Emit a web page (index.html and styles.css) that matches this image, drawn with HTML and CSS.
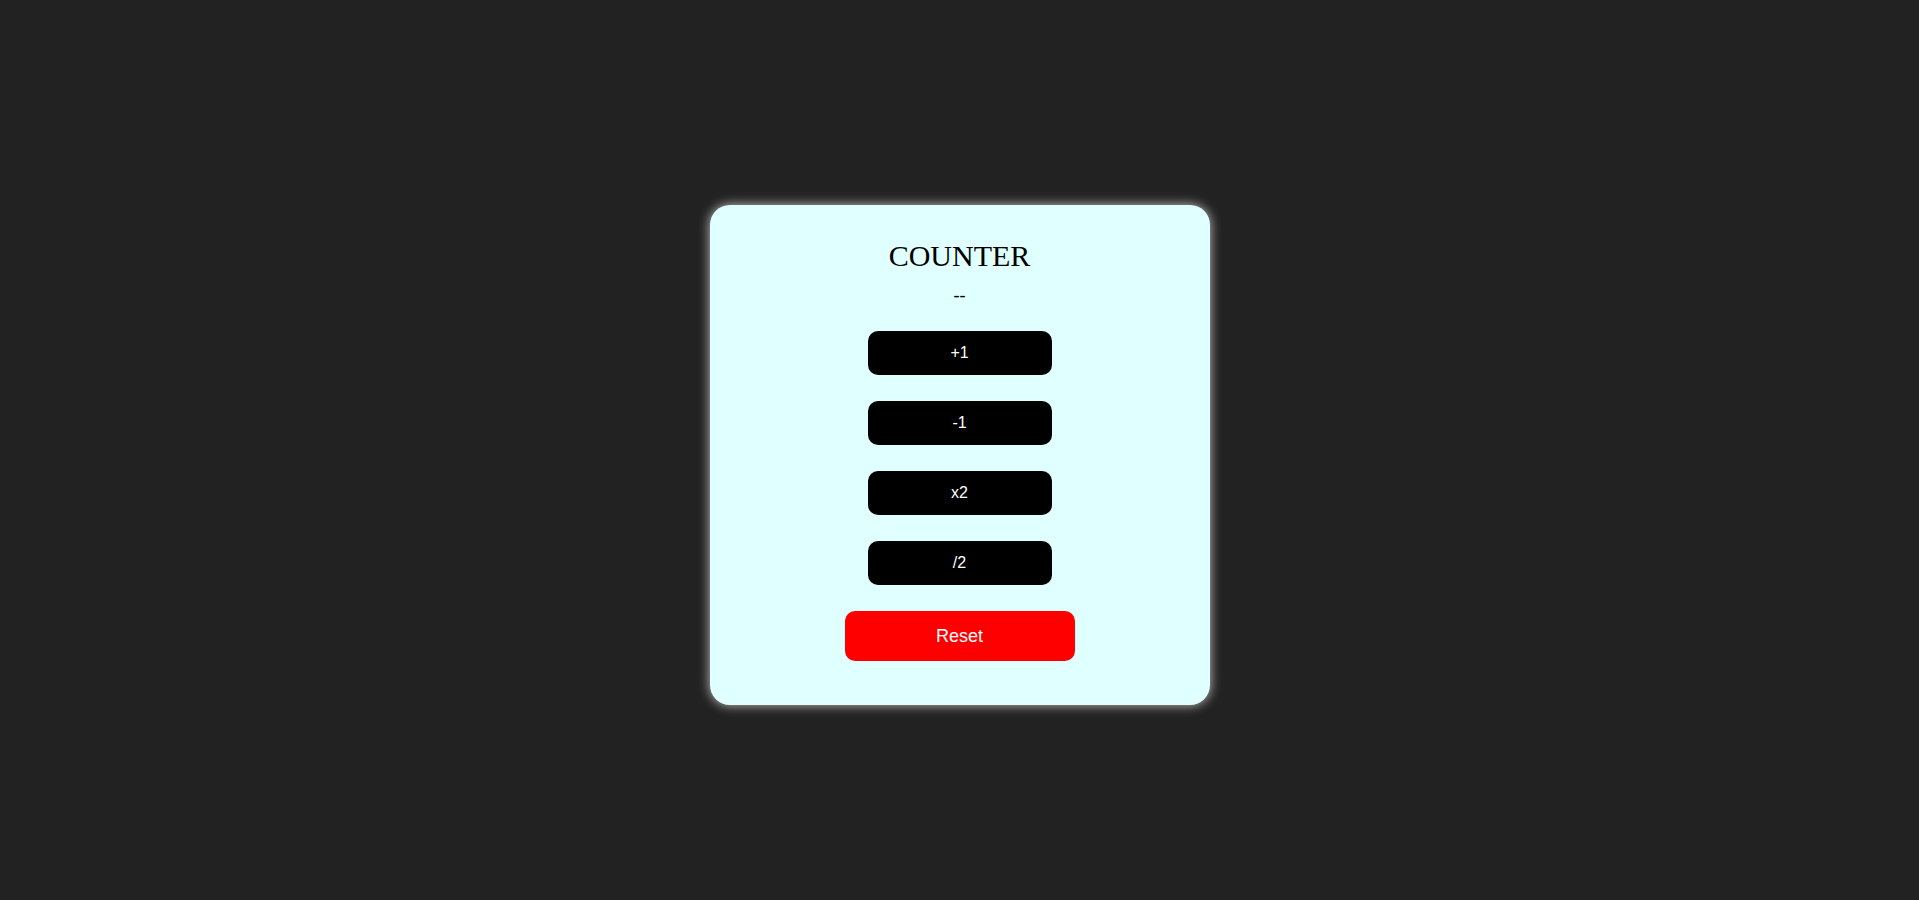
FILE: index.html
```html
<!DOCTYPE html>
<html lang="en">
<head>
<meta charset="utf-8">
<title>Counter</title>
<link rel="stylesheet" href="styles.css">
</head>
<body>
<main class="page">
  <section class="card">
    <h1 class="title">COUNTER</h1>
    <p class="value">--</p>
    <div class="actions">
      <button class="btn">+1</button>
      <button class="btn">-1</button>
      <button class="btn">x2</button>
      <button class="btn">/2</button>
      <button class="btn btn-reset">Reset</button>
    </div>
  </section>
</main>
</body>
</html>
```

FILE: styles.css
```css
html, body {
  margin: 0;
  padding: 0;
  height: 100%;
}
body {
  background: #222222;
  font-family: "Liberation Serif", "Times New Roman", serif;
}
.page {
  height: 900px;
  display: flex;
  justify-content: center;
  align-items: flex-start;
  padding-top: 205px;
  box-sizing: border-box;
}
.card {
  width: 500px;
  height: 500px;
  box-sizing: border-box;
  background: #e0ffff;
  border-radius: 20px;
  box-shadow: 0 0 12px rgba(255, 255, 255, 0.75);
  padding-top: 36px;
  display: flex;
  flex-direction: column;
  align-items: center;
}
.title {
  margin: 0;
  font-size: 30px;
  line-height: 30px;
  font-weight: normal;
  color: #000;
}
.value {
  margin: 15px 0 0;
  font-size: 18px;
  line-height: 18px;
  color: #000;
}
.actions {
  margin-top: 27px;
  display: flex;
  flex-direction: column;
  align-items: center;
  gap: 26px;
}
.btn {
  width: 184px;
  height: 44px;
  border: none;
  border-radius: 10px;
  background: #000;
  color: #fff;
  font-family: "Liberation Sans", Arial, sans-serif;
  font-size: 16px;
  padding: 0;
}
.btn-reset {
  width: 230px;
  height: 50px;
  background: #ff0000;
  font-size: 18px;
}
```
